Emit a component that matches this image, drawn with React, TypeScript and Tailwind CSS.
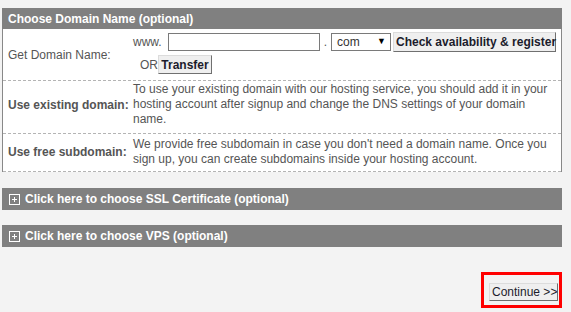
import React from "react";

const PlusBox = () => (
  <svg width="11" height="11" viewBox="0 0 11 11" className="shrink-0">
    <rect x="0.5" y="0.5" width="10" height="10" fill="none" stroke="#ffffff" strokeWidth="1" />
    <path d="M3 5.5h5M5.5 3v5" stroke="#ffffff" strokeWidth="1" />
  </svg>
);

const OptionBar = ({ label, className }: { label: string; className?: string }) => (
  <div className={`flex h-[22px] items-center gap-[5px] bg-[#808080] pl-[7px] text-[12px] font-bold text-white ${className ?? ""}`}>
    <PlusBox />
    <span>{label}</span>
  </div>
);

const WinButton = ({ children, className }: { children: React.ReactNode; className?: string }) => (
  <button
    className={`h-[18px] whitespace-nowrap border border-[#dcdcdc] border-r-[#707070] border-b-[#707070] bg-[#efefef] px-[2px] text-[12px] leading-[16px] text-[#1c1c2c] ${className ?? ""}`}
  >
    {children}
  </button>
);

export default function App() {
  return (
    <div
      className="min-h-[312px] w-[571px] bg-[#f3f3f3] pl-[2px] pt-[8px] text-[12px] text-[#555]"
      style={{ fontFamily: '"Liberation Sans", Arial, sans-serif' }}
    >
      <div className="w-[560px]">
        {/* Choose domain */}
        <div className="flex h-[21px] items-center bg-[#808080] pl-[6px] text-[12px] font-bold text-white">
          Choose Domain Name (optional)
        </div>
        <div className="border-x border-[#888] bg-white">
          <div className="flex h-[52px] border-b border-dashed border-[#b4b4b4]">
            <div className="flex w-[130px] shrink-0 items-center pl-[5px]">Get Domain Name:</div>
            <div className="flex flex-col pt-[4px]">
              <div className="flex h-[18px] items-center">
                <span className="mr-[6px]">www.</span>
                <div className="h-[18px] w-[152px] border border-[#7a7a7a] bg-white" />
                <span className="mx-[4px]">.</span>
                <div className="flex h-[18px] w-[60px] items-center justify-between border border-[#7a7a7a] bg-white pl-[5px] pr-[4px] text-[#333]">
                  <span>com</span>
                  <span className="text-[9px] text-black">▼</span>
                </div>
                <WinButton className="ml-[2px] h-[20px] w-[163px] px-[2px] font-bold">Check availability &amp; register</WinButton>
              </div>
              <div className="mt-[4px] flex items-center pl-[7px]">
                <span>OR</span>
                <WinButton className="h-[19px] w-[54px] font-bold">Transfer</WinButton>
              </div>
            </div>
          </div>

          <div className="flex border-b border-dashed border-[#b4b4b4] pb-[6px] pt-[1px]">
            <div className="flex w-[130px] shrink-0 items-center pl-[5px] font-bold">Use existing domain:</div>
            <p className="w-[426px] leading-[15px]">
              To use your existing domain with our hosting service, you should add it in your hosting account after
              signup and change the DNS settings of your domain name.
            </p>
          </div>

          <div className="flex border-b border-dashed border-[#b4b4b4] pb-[4px] pt-[3px]">
            <div className="flex w-[130px] shrink-0 items-center pl-[5px] font-bold">Use free subdomain:</div>
            <p className="w-[426px] leading-[15px]">
              We provide free subdomain in case you don't need a domain name. Once you sign up, you can create
              subdomains inside your hosting account.
            </p>
          </div>
        </div>

        <OptionBar className="mt-[16px]" label="Click here to choose SSL Certificate (optional)" />
        <OptionBar className="mt-[15px] h-[21px]" label="Click here to choose VPS (optional)" />

        <div className="mt-[25px] flex justify-end">
          <div className="flex h-[36px] w-[81px] items-start justify-end border-[3px] border-[#ff0000] pr-[1px] pt-[8px]">
            <WinButton className="w-[69px] font-normal text-[#1a1a3a]">Continue &gt;&gt;</WinButton>
          </div>
        </div>
      </div>
    </div>
  );
}
